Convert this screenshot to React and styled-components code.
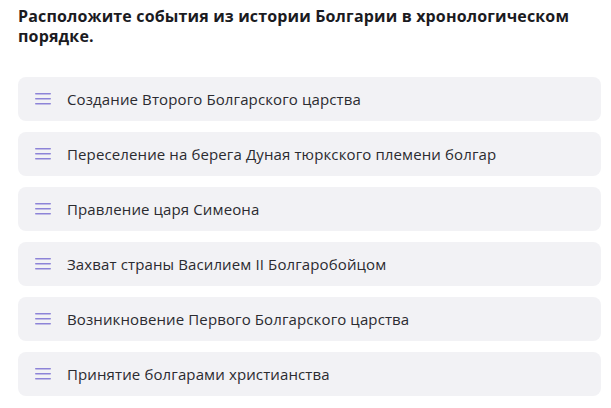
import React from "react";
import styled, { createGlobalStyle } from "styled-components";

const GlobalStyle = createGlobalStyle`
  body {
    margin: 0;
    background: #ffffff;
    font-family: "Open Sans", "Noto Sans", sans-serif;
  }
`;

const events = [
  "Создание Второго Болгарского царства",
  "Переселение на берега Дуная тюркского племени болгар",
  "Правление царя Симеона",
  "Захват страны Василием II Болгаробойцом",
  "Возникновение Первого Болгарского царства",
  "Принятие болгарами христианства",
];

const App = () => {
  return (
    <>
      <GlobalStyle />
      <Page>
        <Title>
          Расположите события из истории Болгарии в хронологическом порядке.
        </Title>
        <List>
          {events.map((item, index) => (
            <Item key={index}>
              <Handle width="16" height="12" viewBox="0 0 16 12">
                <rect x="0" y="0" width="16" height="1.6" rx="0.8" />
                <rect x="0" y="5" width="16" height="1.6" rx="0.8" />
                <rect x="0" y="10" width="16" height="1.6" rx="0.8" />
              </Handle>
              <Label>{item}</Label>
            </Item>
          ))}
        </List>
      </Page>
    </>
  );
};

export default App;

const Page = styled.div`
  width: 611px;
  padding: 6px 10px 0 18px;
  box-sizing: border-box;
`;

const Title = styled.div`
  width: 570px;
  font-size: 16px;
  line-height: 20px;
  font-weight: 700;
  letter-spacing: 0.15px;
  color: #1b1b1f;
`;

const List = styled.div`
  margin-top: 31px;
  display: flex;
  flex-direction: column;
  gap: 11px;
`;

const Item = styled.div`
  height: 44px;
  width: 583px;
  box-sizing: border-box;
  display: flex;
  align-items: center;
  padding-left: 17px;
  background: #f2f2f5;
  border-radius: 8px;
`;

const Handle = styled.svg`
  flex: none;
  fill: #8d84d8;
`;

const Label = styled.span`
  margin-left: 16px;
  font-size: 15px;
  letter-spacing: 0.12px;
  color: #2b2b30;
`;
